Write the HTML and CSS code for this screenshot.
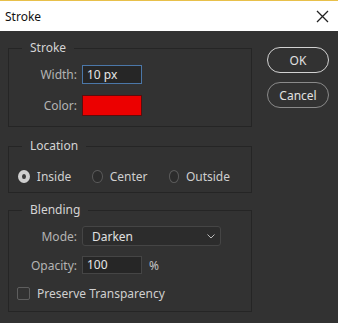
FILE: index.html
```html
<!DOCTYPE html>
<html lang="en">
<head>
    <meta charset="UTF-8">
    <meta name="viewport" content="width=device-width, initial-scale=1.0">
    <link rel="stylesheet" href="styles.css">
    <title>Stroke</title>
</head>
<body>
    <div class="titlebar">
        <span class="title">Stroke</span>
        <svg class="close" width="13" height="13" viewBox="0 0 13 13">
            <path d="M1 1L12 12M12 1L1 12" stroke="#222" stroke-width="1.3" fill="none"/>
        </svg>
    </div>

    <div class="dialog">
        <div class="groups">
            <fieldset class="group stroke-group">
                <legend>Stroke</legend>
                <div class="row">
                    <label class="label">Width:</label>
                    <div class="field width-field">10 px</div>
                </div>
                <div class="row">
                    <label class="label">Color:</label>
                    <div class="swatch"></div>
                </div>
            </fieldset>

            <fieldset class="group location-group">
                <legend>Location</legend>
                <div class="radios">
                    <span class="radio checked"></span><span class="radio-text">Inside</span>
                    <span class="radio"></span><span class="radio-text">Center</span>
                    <span class="radio"></span><span class="radio-text">Outside</span>
                </div>
            </fieldset>

            <fieldset class="group blending-group">
                <legend>Blending</legend>
                <div class="row">
                    <label class="label">Mode:</label>
                    <div class="select">
                        <span>Darken</span>
                        <svg width="8" height="5" viewBox="0 0 8 5">
                            <path d="M0.5 0.5L4 4L7.5 0.5" stroke="#bbb" fill="none"/>
                        </svg>
                    </div>
                </div>
                <div class="row opacity-row">
                    <label class="label">Opacity:</label>
                    <div class="field opacity-field">100</div>
                    <span class="unit">%</span>
                </div>
                <div class="check-row">
                    <span class="checkbox"></span>
                    <span class="check-text">Preserve Transparency</span>
                </div>
            </fieldset>
        </div>

        <div class="buttons">
            <button class="btn ok">OK</button>
            <button class="btn cancel">Cancel</button>
        </div>
    </div>
</body>
</html>
```

FILE: styles.css
```css
body {
    margin: 0;
    background-color: #323232;
    font-family: "Noto Sans", "Open Sans", sans-serif;
    font-size: 12px;
    color: #c4c4c4;
    height: 323px;
    overflow: hidden;
}

.titlebar {
    height: 30px;
    background-color: #fff;
    border-top: 1px solid #e8c04a;
    display: flex;
    align-items: center;
    justify-content: space-between;
    padding: 0 9px 0 5px;
}

.title {
    color: #111;
    font-size: 12px;
}

.dialog {
    display: flex;
    padding: 9px 0 0 8px;
}

.groups {
    width: 244px;
    display: flex;
    flex-direction: column;
}

.group {
    margin: 0;
    border: 1px solid #252525;
    padding: 0;
    min-width: 0;
}

legend {
    margin-left: 13px;
    padding: 0 8px 0 8px;
    color: #d4d4d4;
    line-height: 16px;
}

.stroke-group {
    padding: 8px 0 11px 0;
}

.location-group {
    margin-top: 11px;
    padding: 14px 0 8px 0;
}

.blending-group {
    margin-top: 9px;
    padding: 8px 0 10px 0;
}

.row {
    display: flex;
    align-items: center;
    height: 20px;
}

.row + .row {
    margin-top: 11px;
}

.row + .opacity-row {
    height: 18px;
    margin-top: 10px;
}

.label {
    width: 68px;
    text-align: right;
    margin-right: 5px;
    color: #b4b4b4;
}

.field {
    box-sizing: border-box;
    height: 19px;
    background-color: #262626;
    border: 1px solid #454545;
    color: #e6e6e6;
    padding: 0 4px;
    line-height: 17px;
}

.width-field {
    width: 60px;
    border-color: #4b77a8;
}

.opacity-field {
    width: 60px;
    height: 18px;
    line-height: 16px;
}

.unit {
    margin-left: 7px;
    color: #c4c4c4;
}

.swatch {
    box-sizing: border-box;
    width: 60px;
    height: 21px;
    background-color: #ec0000;
    border: 1px solid #5a0d0d;
}

.select {
    box-sizing: border-box;
    width: 139px;
    height: 20px;
    background-color: #2c2c2c;
    border: 1px solid #454545;
    border-radius: 3px;
    display: flex;
    align-items: center;
    justify-content: space-between;
    padding: 0 5px 0 9px;
    color: #e0e0e0;
}

.radios {
    display: flex;
    align-items: center;
    height: 16px;
    padding-left: 9px;
}

.radio {
    box-sizing: border-box;
    width: 13px;
    height: 13px;
    border-radius: 50%;
    border: 1px solid #5a5a5a;
    background-color: #2c2c2c;
    margin-right: 7px;
}

.radio.checked {
    border: 4px solid #cfcfcf;
    background-color: #3a3a3a;
}

.radio-text {
    color: #cfcfcf;
    margin-right: 21px;
}

.check-row {
    display: flex;
    align-items: center;
    height: 16px;
    margin-top: 11px;
    padding-left: 8px;
}

.checkbox {
    box-sizing: border-box;
    width: 13px;
    height: 13px;
    border: 1px solid #5e5e5e;
    border-radius: 2px;
    margin-right: 7px;
}

.check-text {
    color: #cfcfcf;
}

.buttons {
    display: flex;
    flex-direction: column;
    gap: 9px;
    margin-left: 15px;
    padding-top: 7px;
}

.btn {
    width: 62px;
    height: 26px;
    border-radius: 13px;
    background-color: #323232;
    color: #e0e0e0;
    font-family: inherit;
    font-size: 12px;
    padding: 0;
}

.ok {
    border: 1.5px solid #d2d2d2;
}

.cancel {
    border: 1px solid #8a8a8a;
}
```
